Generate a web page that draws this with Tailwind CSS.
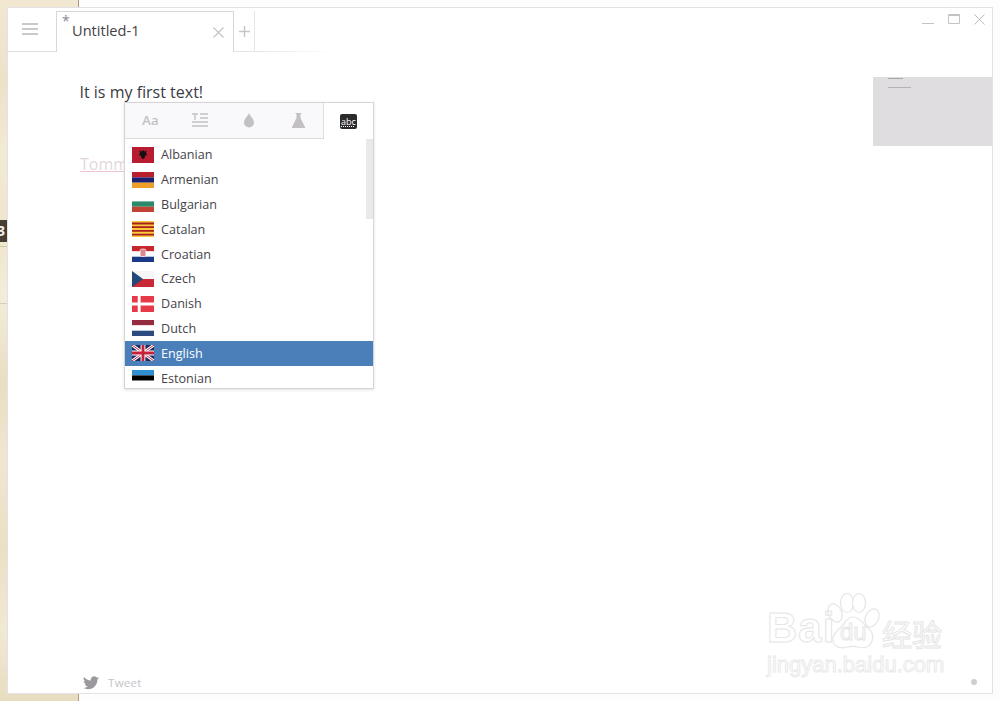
<!DOCTYPE html>
<html>
<head>
<meta charset="utf-8">
<script src="https://cdn.jsdelivr.net/npm/@tailwindcss/browser@4"></script>
</head>
<body class="bg-white">
<div class="relative w-[1000px] h-[701px] overflow-hidden bg-[#fdfdfd] font-['Open_Sans','Noto_Sans_CJK_SC',sans-serif]">
  <!-- desktop wallpaper -->
  <div class="absolute left-0 top-0 w-[79px] h-[701px] border-r border-[#a89a80] bg-[linear-gradient(180deg,#f2e8d2_0%,#ede2c8_12%,#f3ead5_22%,#efe5cc_33%,#f4ecd9_42%,#e9dec2_55%,#f1e7d0_65%,#ebe0c5_78%,#f2e9d3_90%,#e8dcc0_100%)]">
    <div class="absolute left-0 top-[246px] w-[8px] h-px bg-[#cfc4ac]"></div>
    <div class="absolute left-0 top-[303px] w-[8px] h-px bg-[#d8ceb8]"></div>
    <div class="absolute left-0 top-[220px] w-[8px] h-[22px] bg-[#453f36] overflow-hidden text-[#f4f1ea] text-[14px] font-bold leading-[22px]"><span class="block ml-[-3px]">3</span></div>
  </div>

  <!-- window -->
  <div class="absolute left-[8px] top-[8px] w-[984px] h-[685px] bg-white shadow-[0_0_0_1px_#e3e1e6]">
    <!-- header -->
    <div class="relative flex items-end h-[44px]">
      <div class="flex h-[44px] w-[48px] items-center justify-start pl-[14px] border-b border-[#dedce1]">
        <svg width="16" height="12" viewBox="0 0 16 12" class="mt-[-1px]"><path d="M0 1h16M0 6h16M0 11h16" stroke="#b9b7bc" stroke-width="1.4"/></svg>
      </div>
      <div class="relative flex h-[41px] w-[178px] items-center border border-b-0 border-[#d8d6db] bg-white pl-[15px] pr-[9px]">
        <span class="absolute left-[5px] top-[0px] text-[14px] leading-[18px] text-[#8a888d]">*</span>
        <span class="flex-1 mt-[-2px] text-[14.6px] text-[#444247]">Untitled-1</span>
        <svg width="11" height="11" viewBox="0 0 11 11"><path d="M.5.5l10 10M10.5.5l-10 10" stroke="#c3c1c6" stroke-width="1.1"/></svg>
      </div>
      <div class="flex h-[41px] w-[21px] items-center justify-center border-r border-b border-[#e6e4e8]">
        <svg width="11" height="11" viewBox="0 0 11 11"><path d="M5.5 0v11M0 5.5h11" stroke="#c6c4c9" stroke-width="1.4"/></svg>
      </div>
      <div class="h-px w-[80px] bg-gradient-to-r from-[#e6e4e8] to-white"></div>
      <div class="absolute right-[7px] top-[5px] flex items-center gap-[14px]">
        <svg width="12" height="12" viewBox="0 0 12 12"><path d="M0 10.5h12" stroke="#c4c2c7"/></svg>
        <svg width="12" height="10" viewBox="0 0 12 10"><path d="M.5.5h11v9H.5z" fill="none" stroke="#c4c2c7"/><path d="M0 1.5h12" stroke="#c4c2c7"/></svg>
        <svg width="11" height="11" viewBox="0 0 11 11"><path d="M.5.5l10 10M10.5.5l-10 10" stroke="#bdbbc0"/></svg>
      </div>
    </div>

    <!-- minimap -->
    <div class="absolute left-[865px] top-[69px] w-[119px] h-[69px] bg-[#dfdde0]">
      <div class="absolute left-[15px] top-[1px] w-[15px] h-[1px] bg-[#a9a7aa]"></div>
      <div class="absolute left-[15px] top-[10px] w-[23px] h-[1px] bg-[#b5b3b6]"></div>
    </div>

    <!-- editor -->
    <div class="absolute left-[71.5px] top-[72px] text-[16px] leading-[24px] text-[#3c3a3f]">It is my first text!</div>
    <div class="absolute left-[72px] top-[144px] text-[16px] leading-[24px] text-[#e4d6dc] underline decoration-[#eec6d1]">Tommy</div>

    <!-- footer -->
    <div class="absolute left-[75px] top-[668px] flex items-center gap-[9px]">
      <svg width="16" height="14" viewBox="0 0 24 20"><path fill="#9b999e" d="M24 2.4a9.8 9.8 0 0 1-2.8.8A5 5 0 0 0 23.3.5a9.800 9.800 0 0 1-3.100 1.200A4.900 4.900 0 0 0 11.800 6.200 14 14 0 0 1 1.700.9a4.900 4.900 0 0 0 1.500 6.600 4.900 4.900 0 0 1-2.200-.6v.1a4.900 4.900 0 0 0 3.900 4.800 5 5 0 0 1-2.200.1 4.900 4.900 0 0 0 4.600 3.400A9.900 9.900 0 0 1 0 17.300 13.900 13.900 0 0 0 7.500 19.500c9.100 0 14-7.500 14-14v-.6A10 10 0 0 0 24 2.400z"/></svg>
      <span class="text-[11.500px] leading-[14px] tracking-[.3px] text-[#c5c3c8]">Tweet</span>
    </div>
    <div class="absolute left-[963px] top-[671px] w-[6px] h-[6px] rounded-full bg-[#cfcdd2]"></div>

    <!-- watermark -->
    <div class="absolute left-[759px] top-[585px] w-[190px] h-[90px] text-transparent">
      <svg class="absolute left-[60px] top-0" width="53" height="57" viewBox="0 0 53 57" fill="#fff" stroke="#e6e5e7" stroke-width="1.200">
        <ellipse cx="8" cy="20" rx="6.500" ry="9.500" transform="rotate(-25 8 20)"/>
        <ellipse cx="20" cy="10" rx="6.500" ry="9.500"/>
        <ellipse cx="32" cy="10" rx="6.500" ry="9.500"/>
        <ellipse cx="45" cy="25" rx="6.500" ry="9.500" transform="rotate(25 45 25)"/>
        <path d="M26 24c7 0 9 6 14 10 5 4 7 9 5 14-2 6-8 8-14 6-4-1-7-1-11 0-6 2-13 0-14-6-1-6 3-10 8-14 4-3 5-10 12-10z"/>
      </svg>
      <div class="absolute left-0 top-[10px] text-[42px] leading-[50px] font-['Liberation_Sans',sans-serif] font-bold [-webkit-text-stroke:1px_#e6e5e7] tracking-[1px]">Bai</div>
      <div class="absolute left-[73px] top-[24px] text-[24px] leading-[30px] font-['Liberation_Sans',sans-serif] [-webkit-text-stroke:1px_#e6e5e7]">du</div>
      <div class="absolute left-[115px] top-[20px] text-[30px] leading-[40px] font-['Noto_Sans_CJK_SC',sans-serif] [-webkit-text-stroke:1px_#e6e5e7]">经验</div>
      <div class="absolute left-0 top-[57px] text-[22px] leading-[30px] font-['Liberation_Sans',sans-serif] [-webkit-text-stroke:1px_#eaeaeb]">jingyan.baidu.com</div>
    </div>

    <!-- language popover -->
    <div class="absolute left-[116px] top-[94px] w-[250px] h-[287px] bg-white border border-[#d6d4d9] shadow-[0_1px_3px_rgba(0,0,0,.12)] flex flex-col">
      <div class="flex h-[36px] shrink-0">
        <div class="flex w-[199px] items-center border-r border-b border-[#dedce1] bg-[#f9f8fa] pl-[1px]">
          <span class="w-[49px] text-center text-[13px] font-semibold text-[#c2c0c5]">Aa</span>
          <div class="flex w-[50px] justify-center"><svg width="16" height="15" viewBox="0 0 16 15"><path d="M0 1h6M3 1v6M8 1h8M8 5h8M0 9h16M0 13h16" stroke="#c2c0c5" stroke-width="1.400"/></svg></div>
          <div class="flex w-[50px] justify-center"><svg width="12" height="15" viewBox="0 0 12 15"><path fill="#c2c0c5" d="M6 0c1 3 5 6 5 9.500a5 5 0 0 1-10 0C1 6 5 3 6 0z"/></svg></div>
          <div class="flex w-[49px] justify-center"><svg width="13" height="15" viewBox="0 0 13 15"><path fill="#c2c0c5" d="M3.500 0h6v1h-1v4l4.500 9a.7.700 0 0 1-.6 1H.6a.7.700 0 0 1-.6-1l4.500-9V1h-1z"/></svg></div>
        </div>
        <div class="flex flex-1 items-center justify-center">
          <span class="flex h-[15px] w-[17px] items-center justify-center rounded-[2px] bg-[#2b2a2c] text-[9px] leading-none text-white underline decoration-dotted">abc</span>
        </div>
      </div>
      <div class="relative flex-1 overflow-hidden pt-[3.5px]">
        <div class="absolute right-0 top-0 w-[7px] h-[80px] bg-[#e9e8eb]"></div>

        <div class="flex h-[24.8px] items-center gap-[7px] pl-[7px] text-[12.600px] text-[#46444a]">
          <svg width="22" height="16" viewBox="0 0 23 16" preserveAspectRatio="none"><rect width="23" height="16" fill="#b81c30"/><path fill="#111" d="M11.500 3l1.500 1.500 2.500-1-1 2.500 1.500 2-2 .5-1.500 3.500-1-.5-1 .5-1.500-3.500-2-.5 1.500-2-1-2.500 2.500 1z"/></svg>
          <span class="mt-[2px]">Albanian</span>
        </div>
        <div class="flex h-[24.8px] items-center gap-[7px] pl-[7px] text-[12.600px] text-[#46444a]">
          <svg width="22" height="16" viewBox="0 0 23 16" preserveAspectRatio="none"><rect width="23" height="5.400" fill="#b8202e"/><rect y="5.400" width="23" height="5.300" fill="#1b2070"/><rect y="10.700" width="23" height="5.300" fill="#eda028"/></svg>
          <span class="mt-[2px]">Armenian</span>
        </div>
        <div class="flex h-[24.8px] items-center gap-[7px] pl-[7px] text-[12.600px] text-[#46444a]">
          <svg width="22" height="16" viewBox="0 0 23 16" preserveAspectRatio="none"><rect width="23" height="5.400" fill="#fff"/><rect y="5.400" width="23" height="5.300" fill="#2c8a6c"/><rect y="10.700" width="23" height="5.300" fill="#c04434"/></svg>
          <span class="mt-[2px]">Bulgarian</span>
        </div>
        <div class="flex h-[24.8px] items-center gap-[7px] pl-[7px] text-[12.600px] text-[#46444a]">
          <svg width="22" height="16" viewBox="0 0 23 16" preserveAspectRatio="none"><rect width="23" height="16" fill="#fbc840"/><path d="M0 2.500h23M0 6.200h23M0 9.900h23M0 13.600h23" stroke="#a8201c" stroke-width="1.800"/></svg>
          <span class="mt-[2px]">Catalan</span>
        </div>
        <div class="flex h-[24.8px] items-center gap-[7px] pl-[7px] text-[12.600px] text-[#46444a]">
          <svg width="22" height="16" viewBox="0 0 23 16" preserveAspectRatio="none"><rect width="23" height="5.400" fill="#c8262c"/><rect y="5.400" width="23" height="5.300" fill="#fff"/><rect y="10.700" width="23" height="5.300" fill="#1a3a88"/><rect x="8.500" y="3" width="6" height="7.500" rx="1.500" fill="#d98a90" stroke="#fff" stroke-width=".6"/></svg>
          <span class="mt-[2px]">Croatian</span>
        </div>
        <div class="flex h-[24.8px] items-center gap-[7px] pl-[7px] text-[12.600px] text-[#46444a]">
          <svg width="22" height="16" viewBox="0 0 23 16" preserveAspectRatio="none"><rect width="23" height="8" fill="#f6f6f6"/><rect y="8" width="23" height="8" fill="#c92a35"/><path d="M0 0l11.500 8L0 16z" fill="#1f4a7a"/></svg>
          <span class="mt-[2px]">Czech</span>
        </div>
        <div class="flex h-[24.8px] items-center gap-[7px] pl-[7px] text-[12.600px] text-[#46444a]">
          <svg width="22" height="16" viewBox="0 0 23 16" preserveAspectRatio="none"><rect width="23" height="16" fill="#e63a4a"/><path d="M7.500 0v16M0 8h23" stroke="#fff" stroke-width="3"/></svg>
          <span class="mt-[2px]">Danish</span>
        </div>
        <div class="flex h-[24.8px] items-center gap-[7px] pl-[7px] text-[12.600px] text-[#46444a]">
          <svg width="22" height="16" viewBox="0 0 23 16" preserveAspectRatio="none"><rect width="23" height="5.400" fill="#952b3f"/><rect y="5.400" width="23" height="5.300" fill="#fff"/><rect y="10.700" width="23" height="5.300" fill="#2a4a80"/></svg>
          <span class="mt-[2px]">Dutch</span>
        </div>
        <div class="flex h-[24.8px] items-center gap-[7px] pl-[7px] text-[12.600px] text-white bg-[#4a7fba]">
          <svg width="22" height="16" viewBox="0 0 23 16" preserveAspectRatio="none"><rect width="23" height="16" fill="#1f2a60"/><path d="M0 0l23 16M23 0L0 16" stroke="#fff" stroke-width="3"/><path d="M0 0l23 16M23 0L0 16" stroke="#c8203a" stroke-width="1"/><path d="M11.500 0v16M0 8h23" stroke="#fff" stroke-width="5"/><path d="M11.500 0v16M0 8h23" stroke="#c8203a" stroke-width="3"/></svg>
          <span class="mt-[2px]">English</span>
        </div>
        <div class="flex h-[24.8px] items-center gap-[7px] pl-[7px] text-[12.600px] text-[#46444a]">
          <svg width="22" height="16" viewBox="0 0 23 16" preserveAspectRatio="none"><rect width="23" height="5.400" fill="#2f8fd0"/><rect y="5.400" width="23" height="5.300" fill="#000"/><rect y="10.700" width="23" height="5.300" fill="#fff"/></svg>
          <span class="mt-[2px]">Estonian</span>
        </div>
      </div>
    </div>
  </div>
</div>
</body>
</html>
